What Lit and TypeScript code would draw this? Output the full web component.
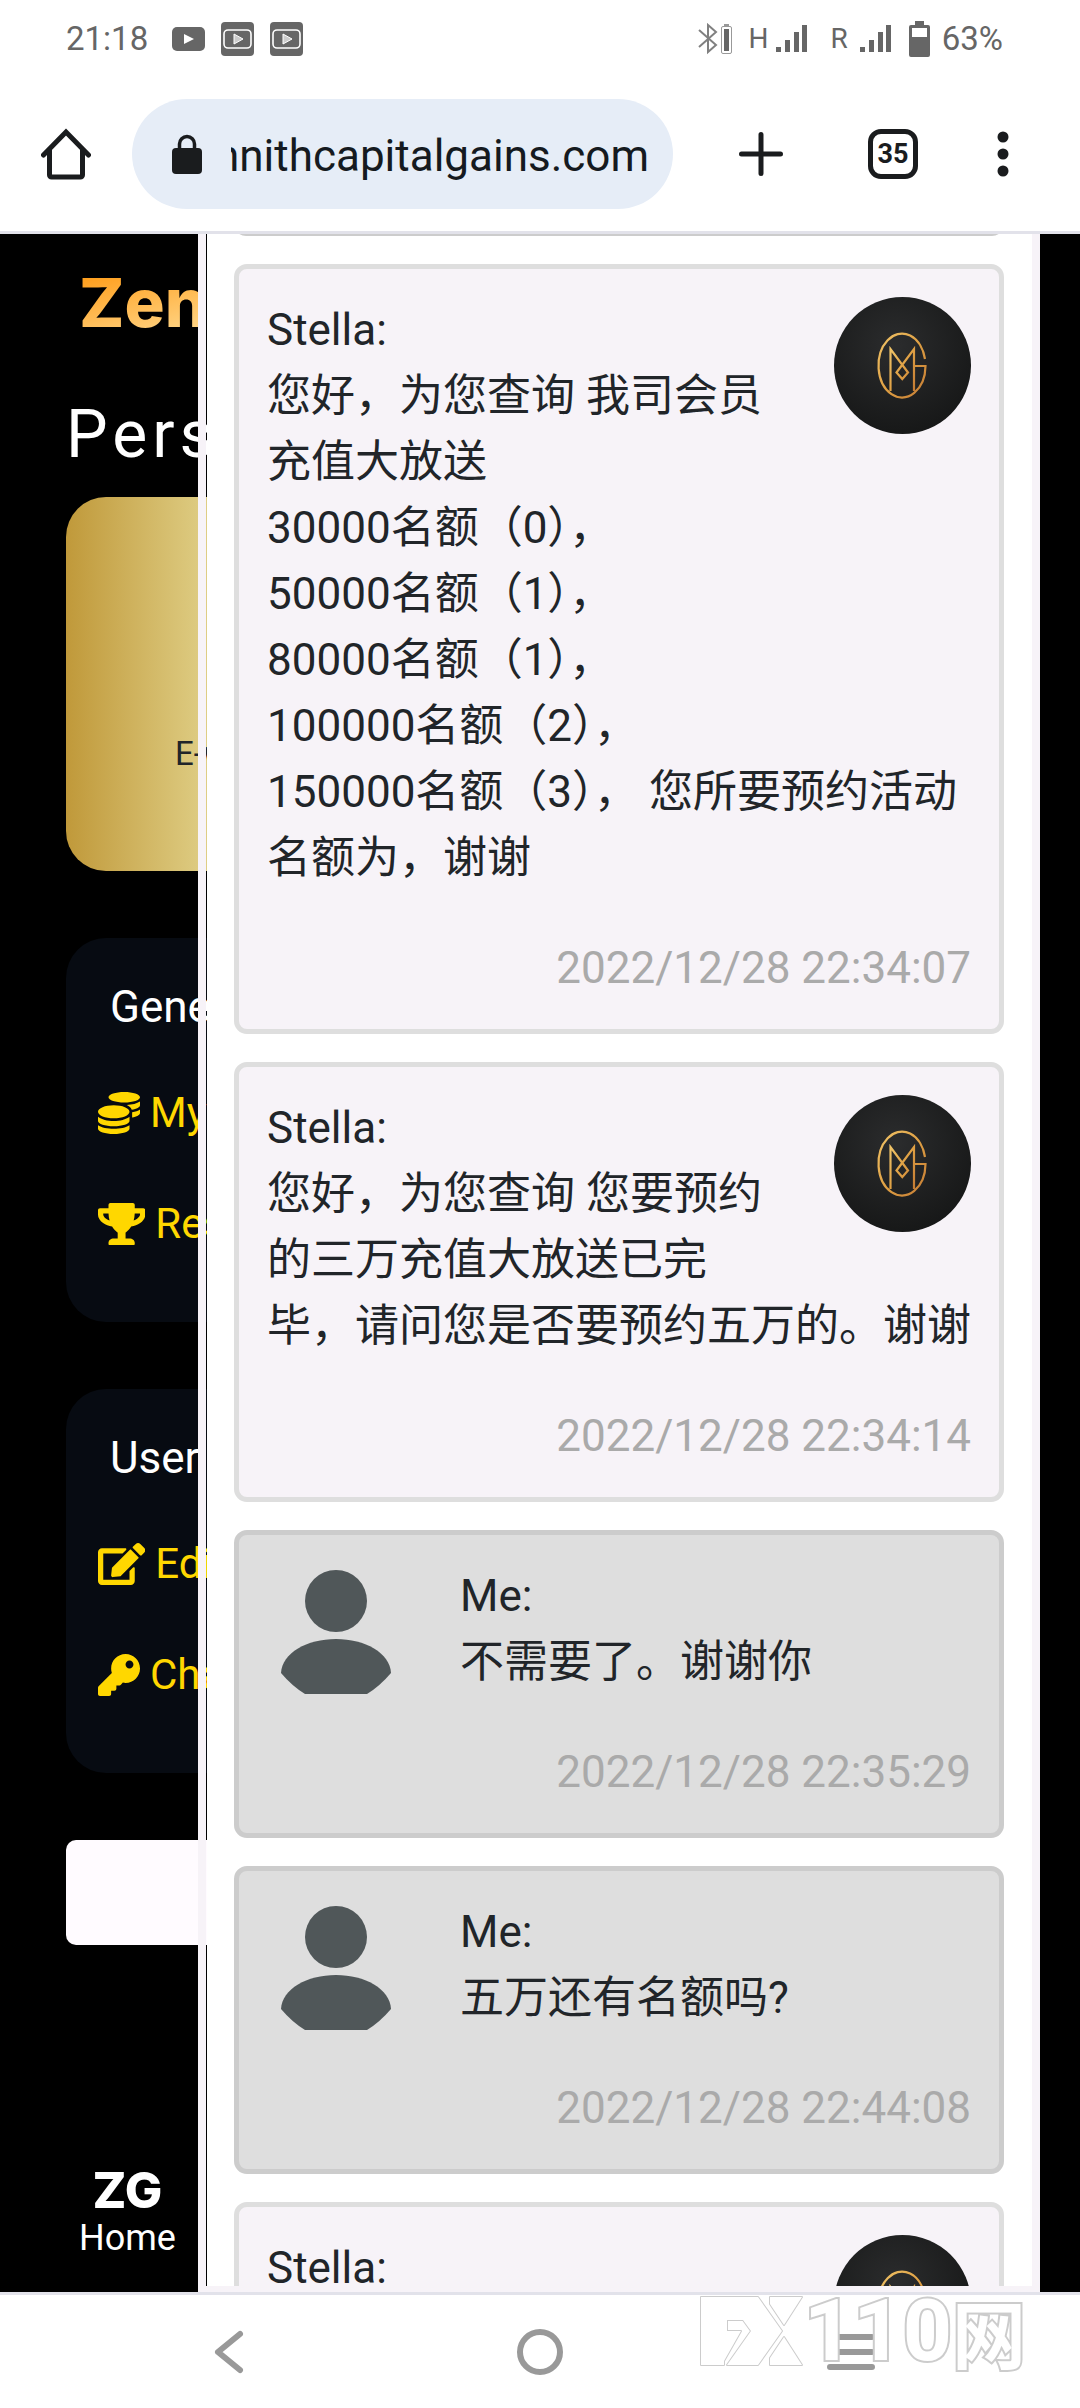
import { LitElement, html, svg, css, nothing } from "lit";
import { customElement, property } from "lit/decorators.js";

interface Message {
  from: "Stella" | "Me";
  lines: string[];
  time?: string;
}

const MESSAGES: Message[] = [
  {
    from: "Stella",
    lines: [
      "您好，为您查询 我司会员充值大放送",
      "30000名额（0），",
      "50000名额（1），",
      "80000名额（1），",
      "100000名额（2），",
      "150000名额（3）， 您所要预约活动名额为，谢谢",
    ],
    time: "2022/12/28 22:34:07",
  },
  {
    from: "Stella",
    lines: ["您好，为您查询 您要预约的三万充值大放送已完毕，请问您是否要预约五万的。谢谢"],
    time: "2022/12/28 22:34:14",
  },
  { from: "Me", lines: ["不需要了。谢谢你"], time: "2022/12/28 22:35:29" },
  { from: "Me", lines: ["五万还有名额吗?"], time: "2022/12/28 22:44:08" },
  { from: "Stella", lines: [] },
];

const COINS =
  "M0 405.3V448c0 35.3 86 64 192 64s192-28.7 192-64v-42.7C342.7 434.4 267.2 448 192 448S41.3 434.4 0 405.3zM320 128c106 0 192-28.7 192-64S426 0 320 0 128 28.7 128 64s86 64 192 64zM0 300.4V352c0 35.3 86 64 192 64s192-28.7 192-64v-51.6c-41.3 34-116.9 51.6-192 51.6S41.3 334.4 0 300.4zm416 11c57.3-11.1 96-31.7 96-55.4v-42.7c-23.2 16.4-57.3 27.6-96 34.5v63.6zM192 160C86 160 0 195.8 0 240s86 80 192 80 192-35.8 192-80-86-80-192-80zm219.3 56.3c60-10.8 100.7-32 100.7-56.3v-42.7c-35.5 25.1-96.5 38.6-160.7 41.8 29.5 14.3 51.2 33.5 60 57.2z";
const TROPHY =
  "M552 64H448V24c0-13.3-10.7-24-24-24H152c-13.3 0-24 10.7-24 24v40H24C10.7 64 0 74.7 0 88v56c0 35.7 22.5 72.4 61.9 100.7 31.5 22.7 69.8 37.1 110 41.7C203.3 338.5 240 360 240 360v72h-48c-35.3 0-64 20.7-64 56v12c0 6.6 5.4 12 12 12h296c6.6 0 12-5.4 12-12v-12c0-35.3-28.7-56-64-56h-48v-72s36.7-21.5 68.1-73.6c40.3-4.6 78.6-19 110-41.7 39.3-28.3 61.9-65 61.9-100.7V88c0-13.3-10.7-24-24-24zM99.3 192.8C74.9 175.2 64 155.6 64 144v-16h64.2c1 32.6 5.8 61.2 12.8 86.2-15.1-5.2-29.2-12.4-41.7-21.4zM512 144c0 16.1-17.7 36.1-35.3 48.8-12.5 9-26.7 16.2-41.8 21.4 7-25 11.8-53.6 12.8-86.2H512v16z";
const EDIT =
  "M402.6 83.2l90.2 90.2c3.8 3.8 3.8 10 0 13.8L274.4 405.6l-92.8 10.3c-12.4 1.4-22.9-9.1-21.5-21.5l10.3-92.8L388.8 83.2c3.8-3.8 10-3.8 13.8 0zm162-22.9l-48.8-48.8c-15.2-15.2-39.9-15.2-55.2 0l-35.4 35.4c-3.8 3.8-3.8 10 0 13.8l90.2 90.2c3.8 3.8 10 3.8 13.8 0l35.4-35.4c15.2-15.3 15.2-40 0-55.2zM384 346.2V448H64V128h229.8c3.2 0 6.2-1.3 8.5-3.5l40-40c7.6-7.6 2.2-20.5-8.5-20.5H48C21.5 64 0 85.5 0 112v352c0 26.5 21.5 48 48 48h352c26.5 0 48-21.5 48-48V306.2c0-10.7-12.9-16-20.5-8.5l-40 40c-2.2 2.3-3.5 5.3-3.5 8.5z";
const KEY =
  "M512 176.001C512 273.203 433.202 352 336 352c-11.22 0-22.19-1.062-32.827-3.069l-24.012 27.014A23.999 23.999 0 0 1 261.223 384H224v40c0 13.255-10.745 24-24 24h-40v40c0 13.255-10.745 24-24 24H24c-13.255 0-24-10.745-24-24v-78.059c0-6.365 2.529-12.47 7.029-16.971l161.802-161.802C163.108 213.814 160 195.271 160 176 160 78.798 238.797.001 335.999 0 433.488-.001 512 78.511 512 176.001zM336 128c0 26.51 21.49 48 48 48s48-21.49 48-48-21.49-48-48-48-48 21.49-48 48z";

const SECTIONS = [
  {
    title: "Gene",
    items: [
      { label: "My", path: COINS, box: 512 },
      { label: "Res", path: TROPHY, box: 576 },
    ],
  },
  {
    title: "User",
    items: [
      { label: "Edi", path: EDIT, box: 576 },
      { label: "Cha", path: KEY, box: 512 },
    ],
  },
];

@customElement("status-bar")
export class StatusBar extends LitElement {
  static styles = css`
    :host {
      display: block;
      color: #666;
      font: 400 33px/40px Roboto, sans-serif;
    }
    .bar {
      display: flex;
      justify-content: space-between;
      align-items: center;
      height: 78px;
      padding: 0 77px 0 66px;
      box-sizing: border-box;
    }
    .side {
      display: flex;
      align-items: center;
    }
    .left {
      gap: 16px;
    }
    .clock {
      margin-right: 8px;
    }
    svg {
      display: block;
    }
    .net {
      font-size: 28px;
      margin: 0 8px 0 16px;
    }
    .net.roam {
      margin: 0 12px 0 22px;
    }
    .cell {
      margin: 0 12px 0 17px;
    }
  `;

  private signal() {
    return html`<svg width="32" height="28" viewBox="0 0 32 28" fill="#666" aria-hidden="true">
      <path d="M0 22h5v5H0zM9 15h5v12H9zM18 7h5v20h-5zM26 0h5v27h-5z" />
    </svg>`;
  }

  private player() {
    return html`<svg width="33" height="34" viewBox="0 0 33 34" aria-hidden="true">
      <rect width="33" height="34" rx="4" fill="#666" />
      <rect x="3" y="8" width="27" height="18" rx="4" fill="none" stroke="#fff" stroke-width="1.6" />
      <path d="M13 12l9 5-9 5z" fill="#ccc" stroke="#fff" />
    </svg>`;
  }

  render() {
    return html`<div class="bar">
      <div class="side left">
        <span class="clock">21:18</span>
        <svg width="33" height="24" viewBox="0 0 33 24" aria-hidden="true">
          <rect width="33" height="24" rx="5" fill="#666" />
          <path d="M12 7l10 5-10 5z" fill="#fff" />
        </svg>
        ${this.player()}${this.player()}
      </div>
      <div class="side">
        <svg width="34" height="32" viewBox="0 0 34 32" aria-hidden="true">
          <path
            d="M1 7l17 15-8 7V2l8 7L1 24"
            fill="none"
            stroke="#808080"
            stroke-width="2"
          />
          <rect x="23.5" y="3.5" width="10" height="27" rx="1.5" fill="none" stroke="#999" />
          <path d="M26 6h5v22h-5z" fill="#666" />
          <path d="M26 1h5v2h-5z" fill="#999" />
        </svg>
        <span class="net">H</span>
        ${this.signal()}
        <span class="net roam">R</span>
        ${this.signal()}
        <svg class="cell" width="21" height="36" viewBox="0 0 21 36" aria-hidden="true">
          <path
            fill="#666"
            fill-rule="evenodd"
            d="M6 0h9v4h4a2 2 0 0 1 2 2v28a2 2 0 0 1-2 2H2a2 2 0 0 1-2-2V6a2 2 0 0 1 2-2h4zM3 7v9h15V7z"
          />
        </svg>
        <span>63%</span>
      </div>
    </div>`;
  }
}

@customElement("browser-toolbar")
export class BrowserToolbar extends LitElement {
  static styles = css`
    :host {
      display: block;
      font-family: Roboto, sans-serif;
      color: #1a1c1e;
    }
    .bar {
      display: flex;
      align-items: center;
      padding: 21px 33px 22px 0;
      border-bottom: 3px solid #e2e2ea;
    }
    button {
      display: flex;
      align-items: center;
      justify-content: center;
      flex: none;
      width: 132px;
      height: 110px;
      padding: 0;
      border: 0;
      background: none;
      color: inherit;
      font: inherit;
    }
    .more {
      width: 88px;
    }
    .address {
      display: flex;
      align-items: center;
      flex: 1;
      min-width: 0;
      height: 110px;
      margin-right: 22px;
      padding: 0 24px 0 40px;
      box-sizing: border-box;
      border-radius: 55px;
      background: #e6edf7;
    }
    .clip {
      display: flex;
      justify-content: flex-end;
      flex: 1;
      min-width: 0;
      margin-left: 29px;
      overflow: hidden;
    }
    input {
      flex: none;
      width: 640px;
      padding: 4px 0 0;
      border: 0;
      background: none;
      color: #151a20;
      font: 400 44px/60px Roboto, sans-serif;
      text-align: right;
    }
    .count {
      display: flex;
      align-items: center;
      justify-content: center;
      width: 50px;
      height: 50px;
      box-sizing: border-box;
      border: 5px solid #1a1c1e;
      border-radius: 13px;
      font-weight: 700;
      font-size: 27px;
      line-height: 30px;
    }
  `;

  render() {
    return html`<div class="bar">
      <button aria-label="Home">
        <svg width="50" height="52" viewBox="0 0 50 52" fill="none" stroke="#1a1c1e" stroke-width="5" aria-hidden="true">
          <path d="M2.500 27L25 4l22.500 23" stroke-linecap="round" />
          <path d="M8.500 22v25a2 2 0 0 0 2 2h29a2 2 0 0 0 2-2V22" />
        </svg>
      </button>
      <label class="address">
        <svg width="30" height="40" viewBox="0 0 30 40" aria-hidden="true">
          <path d="M7.500 15V10a7.500 7.500 0 0 1 15 0v5" fill="none" stroke="#1a1c1e" stroke-width="3.500" />
          <rect y="14" width="30" height="26" rx="4" fill="#1a1c1e" />
        </svg>
        <span class="clip">
          <input type="text" aria-label="Address" value="nnithcapitalgains.com" readonly />
        </span>
      </label>
      <button aria-label="New tab">
        <svg width="44" height="44" viewBox="0 0 44 44" stroke="#1a1c1e" stroke-width="5" stroke-linecap="round" aria-hidden="true">
          <path d="M22 2.500v39M2.500 22h39" />
        </svg>
      </button>
      <button aria-label="Tabs"><span class="count">35</span></button>
      <button class="more" aria-label="More">
        <svg width="12" height="46" viewBox="0 0 12 46" fill="#1a1c1e" aria-hidden="true">
          <circle cx="6" cy="6" r="5.500" />
          <circle cx="6" cy="23" r="5.500" />
          <circle cx="6" cy="40" r="5.500" />
        </svg>
      </button>
    </div>`;
  }
}

@customElement("account-page")
export class AccountPage extends LitElement {
  static styles = css`
    :host {
      display: flex;
      flex-direction: column;
      height: 100%;
      box-sizing: border-box;
      padding: 29px 66px 32px;
      background: #000;
      color: #fff;
      font-family: Roboto, sans-serif;
    }
    .brand {
      align-self: flex-start;
      margin: 0 0 52px 13px;
      font: 800 67px/80px Inter, sans-serif;
      color: transparent;
      background: linear-gradient(165deg, #ffa01f 15%, #ffd88c 90%);
      background-clip: text;
      -webkit-background-clip: text;
    }
    h1 {
      margin: 0 0 22px;
      font-weight: 400;
      font-size: 66px;
      line-height: 80px;
      letter-spacing: 5px;
    }
    .wallet {
      height: 374px;
      box-sizing: border-box;
      padding: 237px 109px 0;
      border-radius: 40px;
      background: linear-gradient(90deg, #c0993a 0, #dfce85 142px, #e8dc98 100%);
      color: #212529;
      font-size: 33px;
      line-height: 40px;
    }
    .group {
      margin-top: 67px;
      padding: 36px 32px 43px;
      border-radius: 40px;
      background: #070b12;
    }
    h2 {
      margin: 0 0 17px 12px;
      font-weight: 400;
      font-size: 44px;
      line-height: 66px;
    }
    .item {
      display: flex;
      align-items: center;
      gap: 10px;
      color: #ffd700;
      font-size: 42px;
      line-height: 111px;
      text-decoration: none;
    }
    .item svg {
      height: 42px;
      flex: none;
    }
    .action {
      height: 105px;
      flex: none;
      margin-top: 67px;
      border: 0;
      border-radius: 10px;
      background: #fffbff;
    }
    .tab {
      display: flex;
      flex-direction: column;
      align-items: center;
      align-self: flex-start;
      margin-top: auto;
      padding: 0 13px;
      color: #fff;
      font-size: 36px;
      line-height: 44px;
      text-decoration: none;
    }
    .mark {
      font: 800 50px/51px Inter, sans-serif;
    }
  `;

  render() {
    return html`
      <div class="brand">Zen</div>
      <h1>Pers</h1>
      <div class="wallet">E-w</div>
      ${SECTIONS.map(
        (s) => html`<section class="group">
          <h2>${s.title}</h2>
          ${s.items.map(
            (i) => html`<a class="item" href="#">
              <svg viewBox="0 0 ${i.box} 512" fill="currentColor" aria-hidden="true">
                ${svg`<path d=${i.path} />`}
              </svg>
              ${i.label}
            </a>`,
          )}
        </section>`,
      )}
      <button class="action" aria-label="Log out"></button>
      <a class="tab" href="#"><span class="mark">ZG</span>Home</a>
    `;
  }
}

@customElement("chat-message")
export class ChatMessage extends LitElement {
  @property({ attribute: false }) message!: Message;

  static styles = css`
    :host {
      display: block;
    }
    .card {
      padding: 28px;
      border: 5px solid #dedede;
      border-radius: 13px;
      background: #f7f3f8;
      color: #212529;
      font: 400 44px/66px Roboto, "Noto Sans CJK SC", sans-serif;
      font-feature-settings: "chws";
    }
    .me {
      border-color: #ccc;
      background: #dedede;
    }
    .avatar {
      display: block;
      float: right;
      width: 137px;
      height: 137px;
      margin-left: 56px;
    }
    .me .avatar {
      float: left;
      margin: 0 56px 0 0;
    }
    p {
      margin: 0 0 44px;
    }
    time {
      display: block;
      color: #aaa;
      text-align: right;
    }
  `;

  private seal() {
    return html`<svg class="avatar" viewBox="0 0 137 137" aria-hidden="true">
      <defs>
        <radialGradient id="felt" cx="45%" cy="35%" r="75%">
          <stop offset="0" stop-color="#2b2c2d" />
          <stop offset="1" stop-color="#141515" />
        </radialGradient>
        <linearGradient id="gold" x1="0" y1="0" x2="1" y2="1">
          <stop offset="0" stop-color="#f0c468" />
          <stop offset="0.500" stop-color="#dfa044" />
          <stop offset="1" stop-color="#c47c34" />
        </linearGradient>
      </defs>
      <circle cx="68.500" cy="68.500" r="68.500" fill="url(#felt)" />
      <g fill="none" stroke="url(#gold)" stroke-width="2.200">
        <path d="M91 62A23.500 32 0 1 0 91.500 69H81" />
        <path d="M56.500 94V52L74 75.500L68.300 82L62.500 75.500L80 52V94" />
      </g>
    </svg>`;
  }

  private person() {
    return html`<svg class="avatar" viewBox="0 0 137 137" fill="#505759" aria-hidden="true">
      <circle cx="69" cy="38" r="31" />
      <path d="M14 110C15 90 40 76 69 76S123 90 124 110Q113 123 100 131H38Q25 123 14 110Z" />
    </svg>`;
  }

  render() {
    const m = this.message;
    const me = m.from === "Me";
    return html`<article class="card ${me ? "me" : ""}">
      ${me ? this.person() : this.seal()}
      <p>${m.from}:${m.lines.map((l) => html`<br />${l}`)}</p>
      ${m.time ? html`<time>${m.time}</time>` : nothing}
    </article>`;
  }
}

@customElement("system-nav")
export class SystemNav extends LitElement {
  static styles = css`
    :host {
      display: block;
      position: relative;
      border-top: 3px solid #e2e2ea;
      background: #fff;
    }
    .row {
      display: grid;
      grid-template-columns: repeat(3, 1fr);
      height: 113px;
      padding: 0 73px;
    }
    button {
      display: flex;
      align-items: center;
      justify-content: center;
      padding: 0;
      border: 0;
      background: none;
    }
    .watermark {
      position: absolute;
      right: 54px;
      top: -2px;
      display: flex;
      align-items: center;
      height: 76px;
      color: #fff;
      font: 700 86px/76px Roboto, sans-serif;
      -webkit-text-stroke: 4px #ccc;
      paint-order: stroke fill;
      pointer-events: none;
    }
    .word {
      font: 700 74px/76px "Noto Sans CJK SC", sans-serif;
    }
  `;

  render() {
    return html`<nav class="row">
        <button aria-label="Back">
          <svg width="30" height="44" viewBox="0 0 30 44" fill="none" stroke="#999" stroke-width="6" stroke-linecap="round" stroke-linejoin="round" aria-hidden="true">
            <path d="M26 4L4 22l22 18" />
          </svg>
        </button>
        <button aria-label="Home screen">
          <svg width="48" height="48" viewBox="0 0 48 48" fill="none" stroke="#999" stroke-width="6" aria-hidden="true">
            <circle cx="24" cy="24" r="20" />
          </svg>
        </button>
        <button aria-label="Recent apps">
          <svg width="48" height="38" viewBox="0 0 48 38" stroke="#999" stroke-width="6" stroke-linecap="round" aria-hidden="true">
            <path d="M3 4h42M3 19h42M3 34h42" />
          </svg>
        </button>
      </nav>
      <div class="watermark">
        <svg width="104" height="72" viewBox="0 0 104 72" fill="#fff" stroke="#ccc" stroke-width="2" stroke-linejoin="round" aria-hidden="true">
          <path d="M1 2H58L82 36L58 70H27L51 36L43 25H27V36H41L24 66V70H1Z" />
          <path d="M70 2H102L84 30L70 9ZM70 70H102L84 42L70 63Z" />
        </svg>
        <span>110</span><span class="word">网</span>
      </div>`;
  }
}

@customElement("app-root")
export class AppRoot extends LitElement {
  static styles = css`
    :host {
      display: flex;
      flex-direction: column;
      height: 100vh;
      background: #fff;
    }
    main {
      position: relative;
      flex: 1;
      min-height: 0;
      overflow: hidden;
    }
    .sheet {
      position: absolute;
      inset: 0 40px 0 198px;
      display: flex;
      border: solid #f7f3f8;
      border-width: 0 8px 6px;
      padding-left: 1px;
    }
    .list {
      flex: 1;
      display: flex;
      flex-direction: column;
      gap: 28px;
      padding: 0 28px 0 27px;
      overflow: hidden;
      background: #fff;
    }
    .earlier {
      flex: none;
      height: 24px;
      margin-top: -22px;
      box-sizing: border-box;
      border: 5px solid #ccc;
      border-radius: 13px;
      background: #dedede;
    }
    chat-message {
      flex: none;
    }
  `;

  render() {
    return html`
      <status-bar></status-bar>
      <browser-toolbar></browser-toolbar>
      <main>
        <account-page></account-page>
        <div class="sheet">
          <div class="list">
            <div class="earlier"></div>
            ${MESSAGES.map((m) => html`<chat-message .message=${m}></chat-message>`)}
          </div>
        </div>
      </main>
      <system-nav></system-nav>
    `;
  }
}
